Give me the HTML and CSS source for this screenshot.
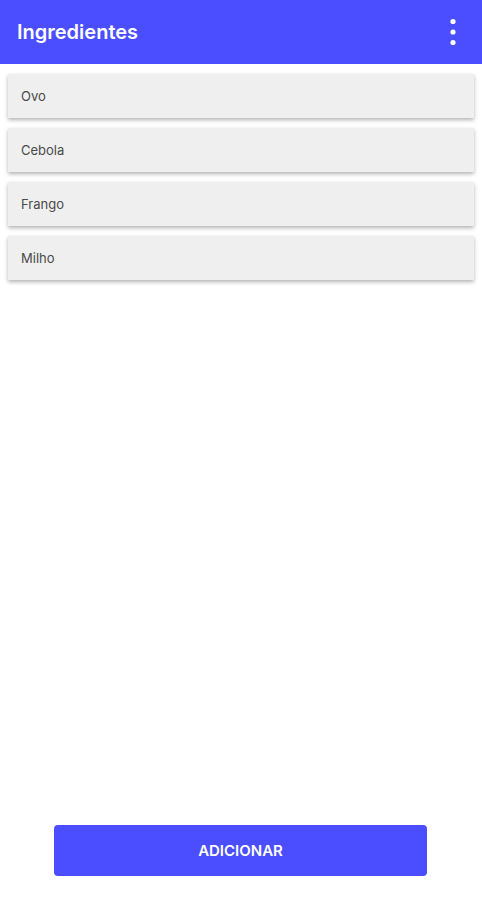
FILE: index.html
```html
<!DOCTYPE html>
<html lang="pt">
<head>
<meta charset="utf-8">
<link rel="stylesheet" href="styles.css">
</head>
<body>
<div class="screen">
  <header class="appbar">
    <h1 class="title">Ingredientes</h1>
    <button class="menu" aria-label="Menu">
      <svg width="8" height="30" viewBox="0 0 8 30"><circle cx="4" cy="4.5" r="2.6" fill="#fff"/><circle cx="4" cy="15" r="2.6" fill="#fff"/><circle cx="4" cy="25.5" r="2.6" fill="#fff"/></svg>
    </button>
  </header>
  <main class="list">
    <div class="item">Ovo</div>
    <div class="item">Cebola</div>
    <div class="item">Frango</div>
    <div class="item">Milho</div>
  </main>
  <div class="footer">
    <button class="add">ADICIONAR</button>
  </div>
</div>
</body>
</html>
```
FILE: styles.css
```css
* { box-sizing: border-box; }
html, body { margin: 0; padding: 0; background: #fff; }
body { font-family: Inter, "Noto Sans", sans-serif; }
.screen { display: flex; flex-direction: column; height: 917px; }
.appbar {
  height: 64px; background: #4b4eff; display: flex; align-items: center;
  justify-content: space-between; padding: 0 17px 0 17px;
}
.title { margin: 0; color: #fff; font-size: 20px; font-weight: 600; letter-spacing: 0; }
.menu { background: none; border: 0; padding: 0; display: flex; margin-right: 8px; }
.list { flex: 1; display: flex; flex-direction: column; gap: 10px; padding: 10px 8px; }
.item {
  height: 44px; background: #efefef; display: flex; align-items: center;
  padding-left: 13px; font-size: 13px; color: #4a4a4a;
  box-shadow: 0 2px 4px rgba(0,0,0,0.3);
}
.footer { display: flex; justify-content: center; padding: 0 0 41px 0; }
.add {
  width: 373px; height: 51px; margin-left: -1px; background: #4b4eff; color: #fff; border: 0;
  border-radius: 4px; font-family: Inter, "Noto Sans", sans-serif; font-size: 15px; font-weight: 600;
}
```
